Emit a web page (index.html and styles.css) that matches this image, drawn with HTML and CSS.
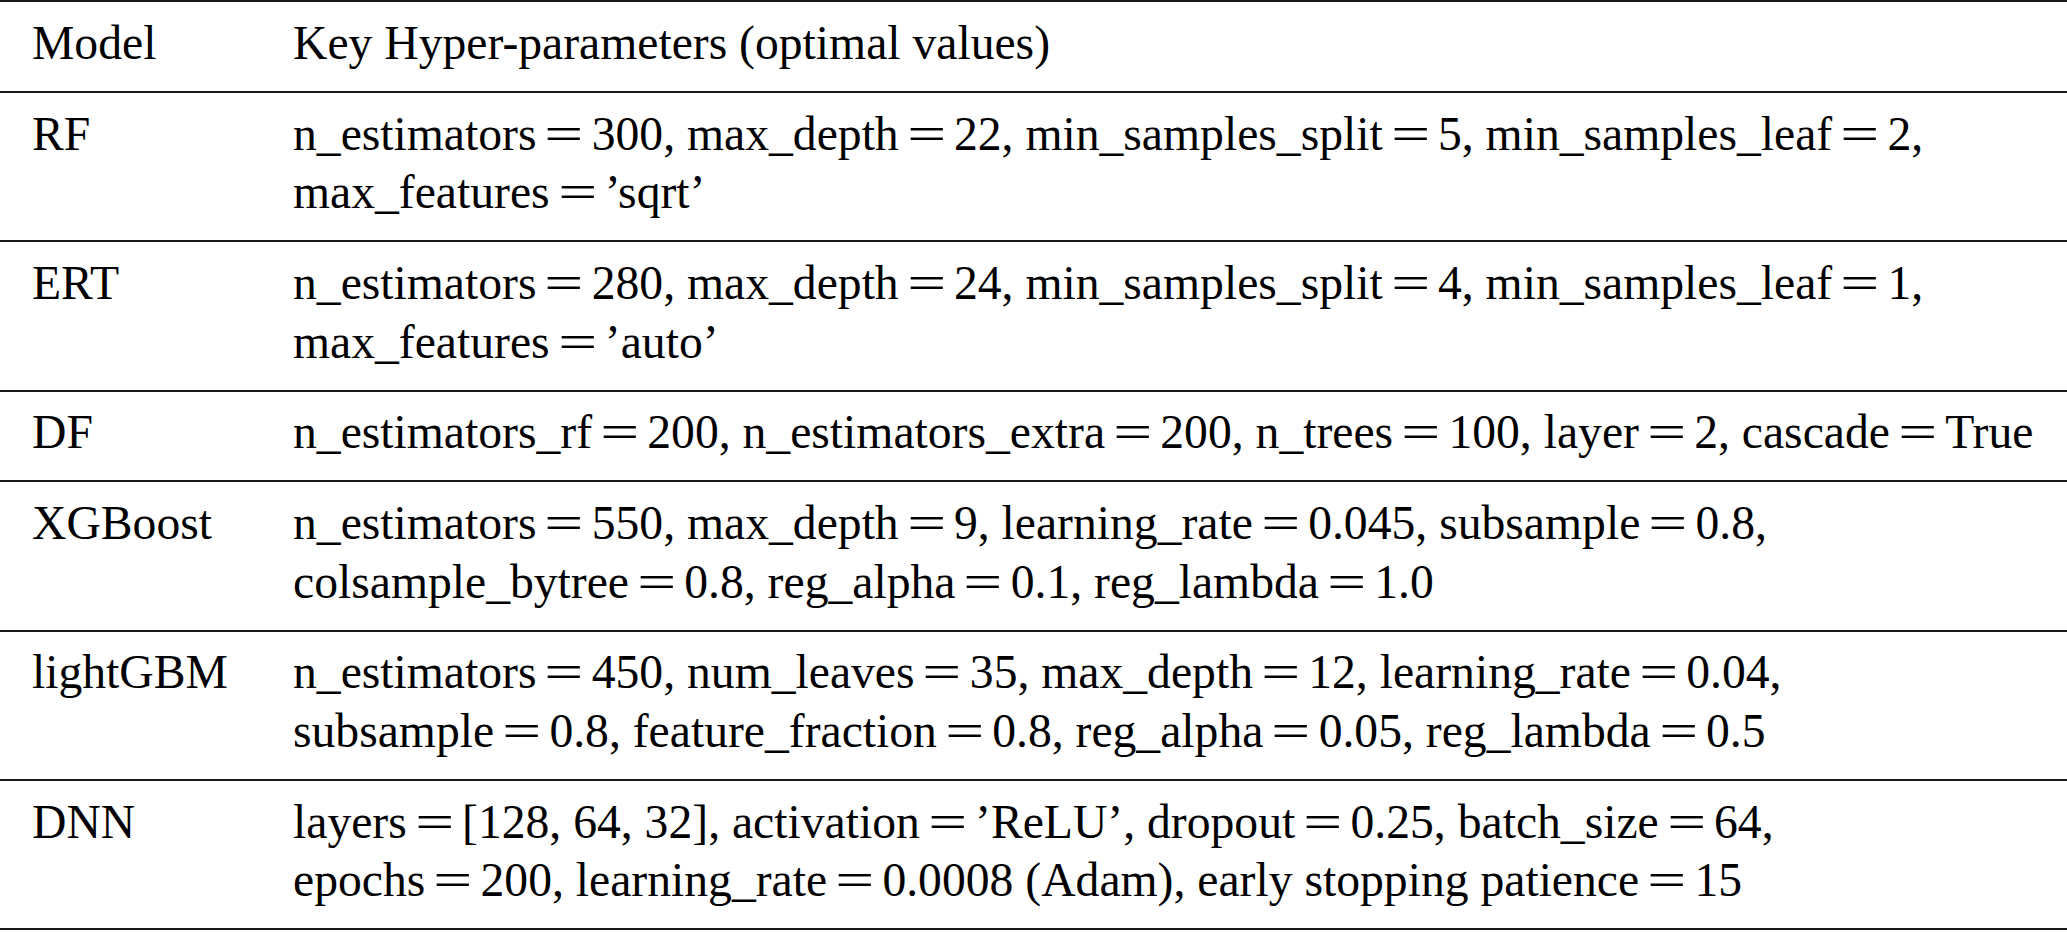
FILE: index.html
```html
<!DOCTYPE html>
<html lang="en">
<head>
<meta charset="utf-8">
<title>Key Hyper-parameters</title>
<link rel="stylesheet" href="styles.css">
</head>
<body>
<table class="tbl">
  <colgroup><col class="w1"><col class="w2"></colgroup>
  <thead>
    <tr class="head"><th class="c1">Model</th><th class="c2">Key Hyper-parameters (optimal values)</th></tr>
  </thead>
  <tbody>
    <tr><td class="c1">RF</td><td class="c2">n_estimators<span class="eq">=</span>300, max_depth<span class="eq">=</span>22, min_samples_split<span class="eq">=</span>5, min_samples_leaf<span class="eq">=</span>2,<br>max_features<span class="eq">=</span>’sqrt’</td></tr>
    <tr><td class="c1">ERT</td><td class="c2">n_estimators<span class="eq">=</span>280, max_depth<span class="eq">=</span>24, min_samples_split<span class="eq">=</span>4, min_samples_leaf<span class="eq">=</span>1,<br>max_features<span class="eq">=</span>’auto’</td></tr>
    <tr><td class="c1">DF</td><td class="c2">n_estimators_rf<span class="eq">=</span>200, n_estimators_extra<span class="eq">=</span>200, n_trees<span class="eq">=</span>100, layer<span class="eq">=</span>2, cascade<span class="eq">=</span>True</td></tr>
    <tr><td class="c1">XGBoost</td><td class="c2">n_estimators<span class="eq">=</span>550, max_depth<span class="eq">=</span>9, learning_rate<span class="eq">=</span>0.045, subsample<span class="eq">=</span>0.8,<br>colsample_bytree<span class="eq">=</span>0.8, reg_alpha<span class="eq">=</span>0.1, reg_lambda<span class="eq">=</span>1.0</td></tr>
    <tr><td class="c1">lightGBM</td><td class="c2">n_estimators<span class="eq">=</span>450, num_leaves<span class="eq">=</span>35, max_depth<span class="eq">=</span>12, learning_rate<span class="eq">=</span>0.04,<br>subsample<span class="eq">=</span>0.8, feature_fraction<span class="eq">=</span>0.8, reg_alpha<span class="eq">=</span>0.05, reg_lambda<span class="eq">=</span>0.5</td></tr>
    <tr><td class="c1">DNN</td><td class="c2">layers<span class="eq">=</span>[128, 64, 32], activation<span class="eq">=</span>’ReLU’, dropout<span class="eq">=</span>0.25, batch_size<span class="eq">=</span>64,<br>epochs<span class="eq">=</span>200, learning_rate<span class="eq">=</span>0.0008 (Adam), early stopping patience<span class="eq">=</span>15</td></tr>
  </tbody>
</table>
</body>
</html>
```
FILE: styles.css
```css
html, body {
  margin: 0;
  padding: 0;
  background: #ffffff;
}

.tbl {
  width: 2067px;
  border-collapse: collapse;
  table-layout: fixed;
  font-family: "Liberation Serif", "Times New Roman", serif;
  font-size: 47.65px;
  line-height: 58.6px;
  color: #000000;
}

.w1 {
  width: 293px;
}

.tbl tr {
  border-bottom: 2px solid #1a1a1a;
}

.tbl .head {
  border-top: 2px solid #1a1a1a;
}

.tbl th,
.tbl td {
  padding: 11.8px 0 18.4px 0;
  text-align: left;
  vertical-align: top;
  font-weight: normal;
  white-space: nowrap;
}

.tbl .c1 {
  padding-left: 32px;
}

.eq {
  display: inline-block;
  width: 0.66em;
  margin: 0 0.25em;
  text-align: center;
  transform: scaleX(1.45);
}
```
